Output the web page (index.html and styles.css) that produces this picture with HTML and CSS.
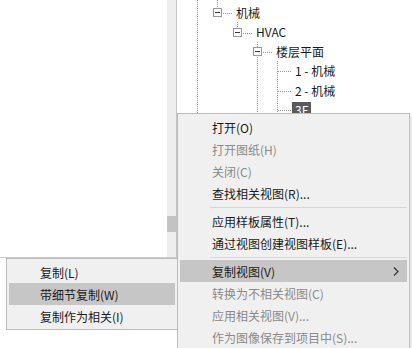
FILE: index.html
```html
<!DOCTYPE html>
<html lang="zh-CN">
<head>
<meta charset="utf-8">
<title>Revit 项目浏览器 右键菜单</title>
<link rel="stylesheet" href="styles.css">
</head>
<body>
<div class="screen">
  <div class="side"></div>
  <div class="scroll"><div class="thumb"></div></div>
  <div class="tree">
    <svg class="lines" width="235" height="113" viewBox="0 0 235 113">
      <g stroke="#9a9a9a" stroke-width="1" stroke-dasharray="1 1" fill="none">
        <path d="M20.5 0V113"/>
        <path d="M40.5 0V9"/>
        <path d="M46 13.5H56"/>
        <path d="M60.5 22V29"/>
        <path d="M66 33.5H76"/>
        <path d="M80.5 42V48M80.5 57V113"/>
        <path d="M86 52.5H96"/>
        <path d="M100.5 61V113"/>
        <path d="M101 71.5H114M101 91.5H114M101 110.5H114"/>
      </g>
    </svg>
    <div class="row lv1"><span class="box"></span><span class="label">机械</span></div>
    <div class="row lv2"><span class="box"></span><span class="label">HVAC</span></div>
    <div class="row lv3"><span class="box"></span><span class="label">楼层平面</span></div>
    <div class="row leaf"><span class="label">1 - 机械</span></div>
    <div class="row leaf"><span class="label">2 - 机械</span></div>
    <div class="row leaf"><span class="label selected">3F</span></div>
  </div>

  <div class="menu">
    <div class="item">打开(O)</div>
    <div class="item disabled">打开图纸(H)</div>
    <div class="item disabled">关闭(C)</div>
    <div class="item">查找相关视图(R)...</div>
    <div class="sep"></div>
    <div class="item">应用样板属性(T)...</div>
    <div class="item">通过视图创建视图样板(E)...</div>
    <div class="sep"></div>
    <div class="item active">复制视图(V)<svg class="chev" width="6" height="9" viewBox="0 0 6 9"><path d="M1 0.5L5 4.5L1 8.5" stroke="#333" stroke-width="1.2" fill="none"/></svg></div>
    <div class="item disabled">转换为不相关视图(C)</div>
    <div class="item disabled">应用相关视图(V)...</div>
    <div class="item disabled">作为图像保存到项目中(S)...</div>
  </div>

  <div class="submenu">
    <div class="item">复制(L)</div>
    <div class="item active">带细节复制(W)</div>
    <div class="item">复制作为相关(I)</div>
  </div>
</div>
</body>
</html>
```

FILE: styles.css
```css
* { box-sizing: border-box; }
html, body { margin: 0; padding: 0; background: #fff; }
body {
  font-family: "Noto Sans CJK SC", "Noto Sans", sans-serif;
  font-size: 12px;
  color: #1a1a1a;
}
.screen {
  position: relative;
  width: 412px;
  height: 348px;
  overflow: hidden;
  display: flex;
  align-items: flex-start;
  background: #fff;
}
.side {
  width: 167px;
  height: 258px;
  flex: none;
  background: #fff;
  border-bottom: 1px solid #c9c9c9;
}
.scroll {
  width: 10px;
  height: 258px;
  flex: none;
  background: #eeeeee;
  border-right: 1px solid #c4c4c4;
  border-bottom: 1px solid #c9c9c9;
  padding-top: 216px;
}
.thumb {
  height: 16px;
  background: #c3c3c3;
}
.tree {
  position: relative;
  flex: 1;
  height: 113px;
  padding-top: 3px;
  background: #fff;
}
.lines {
  position: absolute;
  left: 0;
  top: 0;
}
.row {
  position: relative;
  height: 19.5px;
  display: flex;
  align-items: center;
  white-space: nowrap;
  line-height: 16px;
}
.lv1 { padding-left: 36px; }
.lv2 { padding-left: 56px; }
.lv3 { padding-left: 76px; }
.leaf { padding-left: 115px; }
.box {
  position: relative;
  width: 9px;
  height: 9px;
  border: 1px solid #9a9a9a;
  background: #fff;
  flex: none;
  margin-right: 13px;
}
.box::after {
  content: "";
  position: absolute;
  left: 1px;
  top: 3px;
  width: 5px;
  height: 1px;
  background: #3a3a3a;
}
.label { padding: 0 3px; }
.lv1 .label, .lv2 .label, .lv3 .label { padding: 0 1px; }
.selected {
  background: #5a5a5a;
  color: #fff;
  line-height: 16px;
}
.menu {
  position: absolute;
  left: 177px;
  top: 113px;
  width: 233px;
  height: 250px;
  background: #f0f0f0;
  border: 1px solid #bdbdbd;
  padding: 2px;
  box-shadow: 2px 2px 3px rgba(0,0,0,0.12);
}
.item {
  height: 22px;
  display: flex;
  align-items: center;
  padding-left: 32px;
  padding-right: 8px;
  white-space: nowrap;
}
.item.disabled { color: #8a8a8a; }
.item.active { background: #c6c6c6; }
.chev { margin-left: auto; }
.sep {
  height: 6px;
  margin-left: 30px;
  border-top: 3px solid transparent;
  background: linear-gradient(#d7d7d7, #d7d7d7) 0 0 / 100% 1px no-repeat;
  background-origin: padding-box;
}
.submenu {
  position: absolute;
  left: 6px;
  top: 258px;
  width: 172px;
  height: 72px;
  background: #f0f0f0;
  border: 1px solid #bdbdbd;
  padding: 2px;
}
.submenu .item { padding-left: 31px; }
```
